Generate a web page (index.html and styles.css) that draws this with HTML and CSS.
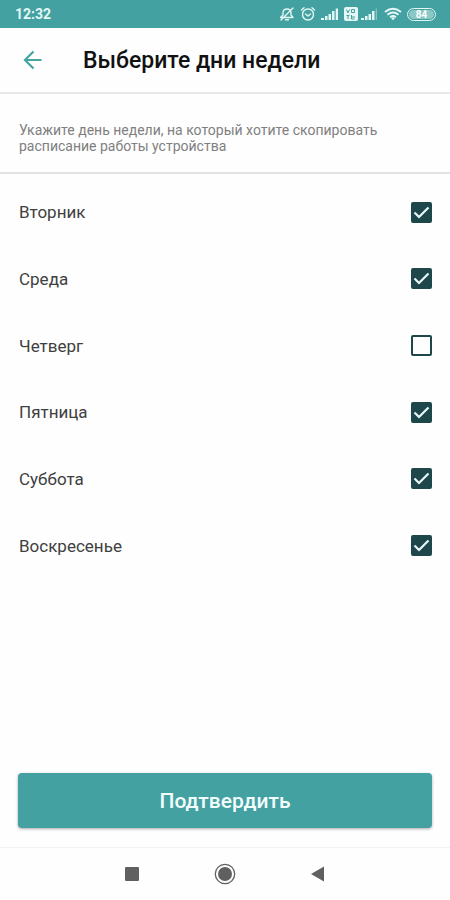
FILE: index.html
```
<!DOCTYPE html>
<html lang="ru">
<head>
<meta charset="utf-8">
<meta name="viewport" content="width=device-width, initial-scale=1">
<title>Выберите дни недели</title>
<link rel="stylesheet" href="styles.css">
</head>
<body>
<div class="screen">
  <div class="status">
    <span class="clock">12:32</span>
    <div class="indicators">
      <svg class="muted" width="16" height="16" viewBox="0 0 16 16" fill="none" stroke="currentColor" stroke-width="1.400" stroke-linecap="round" stroke-linejoin="round"><path d="M1.500 11.500h12.500l-2-2.500V6.500A4 4 0 0 0 8 3a4 4 0 0 0-4 3.500V9zM6.500 13.800h3M2 14 14 2"/></svg>
      <svg class="alarm" width="16" height="16" viewBox="0 0 16 16" fill="none" stroke="currentColor" stroke-width="1.400" stroke-linecap="round" stroke-linejoin="round"><circle cx="8" cy="8.500" r="5.500"/><path d="M5.500 8 8 10l2.500-2M1.500 4 4 1.800M14.500 4 12 1.800"/></svg>
      <svg class="signal" width="18" height="14" viewBox="0 0 18 14" fill="currentColor"><path d="M0 11h3v2H0zM4 9h2.500v4H4zM7.500 7H10v6H7.500zM11 4h2.500v9H11zM14.700 1.500H17V13h-2.300z"/></svg>
      <svg class="volte" width="14" height="14" viewBox="0 0 14 14"><rect width="14" height="14" rx="2" fill="currentColor"/><path d="M2.500 2.500 4 6l1.500-3.500M7.500 2.500h3v3h-3zM2.500 8.500h3M4 8.500V12M7.500 8v4h3M8 10h3" fill="none" stroke="#43a1a1"/></svg>
      <svg class="signal" width="18" height="14" viewBox="0 0 18 14" fill="currentColor"><path d="M0 11h3v2H0zM4 9h2.500v4H4zM7.500 7H10v6H7.500zM11 4h2.500v9H11z"/><path d="M14.700 1.500H16V13h-1.300z" opacity=".4"/></svg>
      <svg class="wifi" width="18" height="14" viewBox="0 0 18 14" fill="none" stroke="currentColor" stroke-width="1.800"><path d="M1 5q8-6.500 16 0M3.500 7.700q5.500-4.500 11 0M6 10.200q3-2.400 6 0"/><path d="m7 11 2 2.300 2-2.300q-2-1.400-4 0z" fill="currentColor" stroke="none"/></svg>
      <span class="battery"><span class="charge">84</span></span>
    </div>
  </div>
  <header class="topbar">
    <button class="back" type="button" aria-label="Назад">
      <svg width="20" height="20" viewBox="0 0 20 20" fill="none" stroke="currentColor" stroke-width="2.200"><path d="M18.500 10H2.500M10.500 1.500 2 10l8.500 8.500"/></svg>
    </button>
    <h1 class="title">Выберите дни недели</h1>
  </header>
  <main class="content">
    <p class="hint">Укажите день недели, на который хотите скопировать расписание работы устройства</p>
    <form class="form">
      <div class="days">
        <label class="day">Вторник<input type="checkbox" checked></label>
        <label class="day">Среда<input type="checkbox" checked></label>
        <label class="day">Четверг<input type="checkbox"></label>
        <label class="day">Пятница<input type="checkbox" checked></label>
        <label class="day">Суббота<input type="checkbox" checked></label>
        <label class="day">Воскресенье<input type="checkbox" checked></label>
      </div>
      <button class="confirm" type="button">Подтвердить</button>
    </form>
  </main>
  <nav class="system">
    <button type="button" aria-label="Недавние"><svg width="22" height="22" viewBox="0 0 22 22" fill="currentColor"><rect x="4" y="4" width="14" height="14" rx="1"/></svg></button>
    <button type="button" aria-label="Домой"><svg width="22" height="22" viewBox="0 0 22 22"><circle cx="11" cy="11" r="9.700" fill="none" stroke="currentColor" stroke-width="1.300"/><circle cx="11" cy="11" r="7" fill="currentColor"/></svg></button>
    <button type="button" aria-label="Назад"><svg width="22" height="22" viewBox="0 0 22 22" fill="currentColor"><path d="M4 11 17 3.500v15z"/></svg></button>
  </nav>
</div>
</body>
</html>
```
FILE: styles.css
```
* {
  box-sizing: border-box;
}

body {
  margin: 0;
  background: #fefefe;
  color: #404040;
  font-family: Roboto, "Liberation Sans", sans-serif;
}

button {
  padding: 0;
  border: 0;
  background: none;
  color: inherit;
  font: inherit;
}

svg {
  display: block;
}

.screen {
  display: flex;
  flex-direction: column;
  min-height: 100vh;
}

.status {
  display: flex;
  align-items: center;
  justify-content: space-between;
  height: 28px;
  padding: 0 14px 0 15px;
  background: #43a1a1;
  color: #e4f7f5;
}

.clock {
  font-size: 14px;
  font-weight: 700;
}

.indicators {
  display: flex;
  align-items: center;
  gap: 5px;
}

.volte {
  margin-right: -2px;
}

.battery {
  display: flex;
  width: 29px;
  height: 13px;
  padding: 1px;
  border: 1px solid currentColor;
  border-radius: 7px;
}

.charge {
  flex: 1;
  border-radius: 5px;
  background: #8ac8c6;
  color: #fff;
  font-size: 10px;
  font-weight: 700;
  line-height: 9px;
  text-align: center;
}

.topbar {
  display: flex;
  align-items: center;
  gap: 40px;
  height: 66px;
  padding: 0 23px;
  border-bottom: 2px solid #e9e9e9;
}

.back {
  color: #45a5a3;
}

.title {
  margin: 0;
  padding-top: 2px;
  color: #111;
  font-size: 23px;
  font-weight: 500;
  line-height: 28px;
}

.content,
.form {
  display: flex;
  flex: 1;
  flex-direction: column;
}

.hint {
  margin: 0;
  padding: 28px 56px 18px 19px;
  border-bottom: 2px solid #e2e2e2;
  color: #808080;
  font-size: 14px;
  line-height: 16px;
}

.days {
  display: grid;
  grid-auto-rows: 1fr;
  min-height: 400px;
  margin-top: 5px;
}

.day {
  display: flex;
  align-items: center;
  justify-content: space-between;
  padding: 0 18px 0 19px;
  font-size: 17px;
}

.day input {
  appearance: none;
  width: 21px;
  height: 21px;
  margin: 0;
  border: 2px solid #1d474b;
  border-radius: 2px;
}

.day input:checked {
  background: #1d474b url("data:image/svg+xml,%3Csvg xmlns='http://www.w3.org/2000/svg' viewBox='0 0 17 17'%3E%3Cpath d='M1.500 8.500 6 13 15.500 3.500' fill='none' stroke='%23e8f8f8' stroke-width='2.200'/%3E%3C/svg%3E") center / 17px 17px no-repeat;
}

.confirm {
  height: 55px;
  margin: auto 18px 19px;
  border-radius: 4px;
  background: #43a1a1;
  box-shadow: 0 1px 3px #0005;
  color: #f4fdfd;
  font-size: 21px;
  font-weight: 500;
}

.system {
  display: flex;
  align-items: center;
  justify-content: center;
  gap: 71px;
  height: 53px;
  border-top: 1px solid #f3f3f3;
  color: #606060;
}
```
